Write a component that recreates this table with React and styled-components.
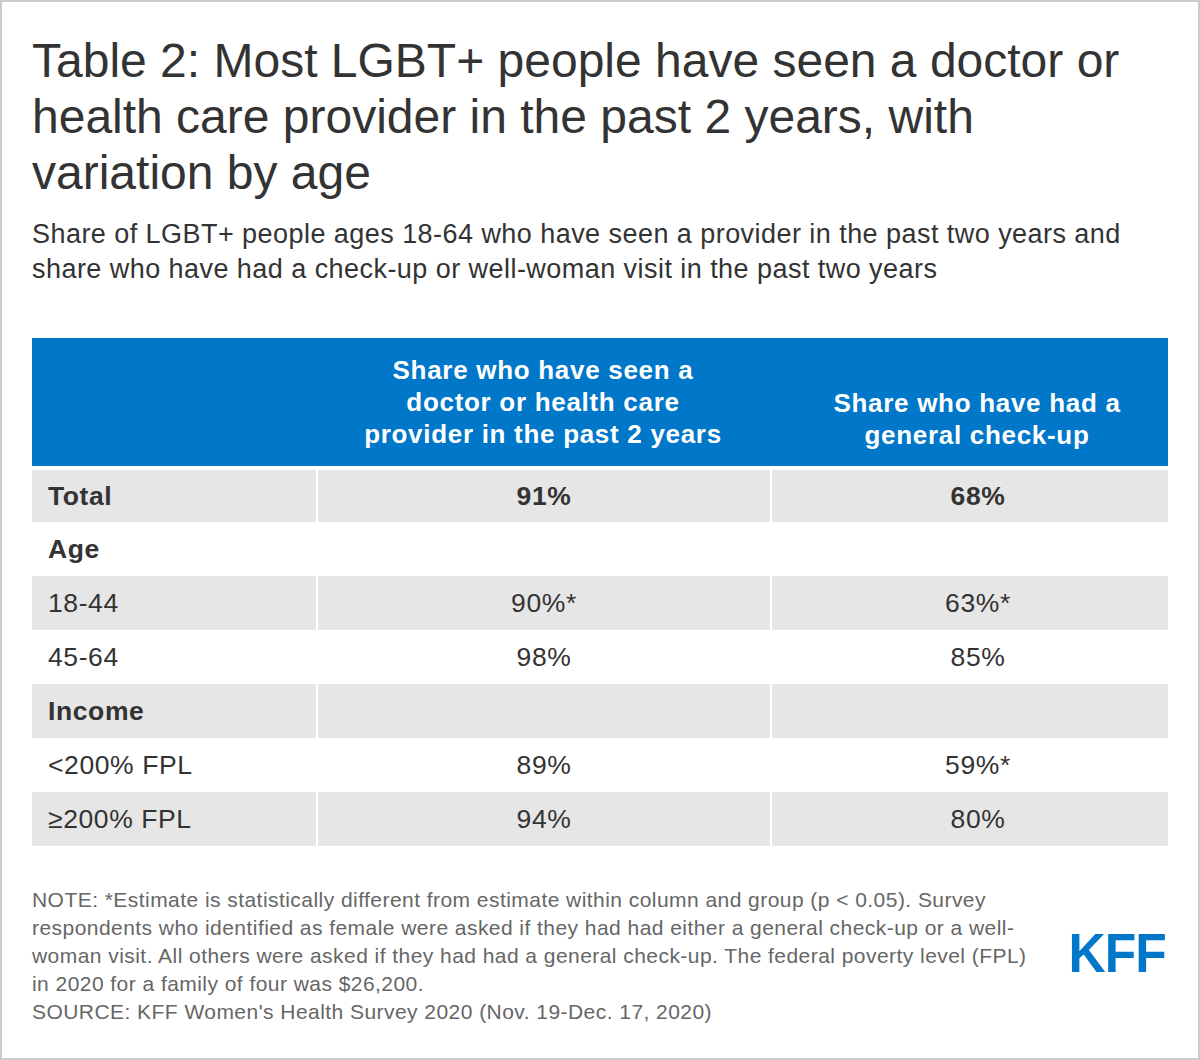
import React from 'react';
import styled, { createGlobalStyle } from 'styled-components';

const TEXT_COLOR = '#333333';
const BLUE = '#0077c8';
const ROW_GRAY = '#e6e6e6';

const GlobalStyle = createGlobalStyle`
  html, body {
    margin: 0;
    padding: 0;
    background: #ffffff;
  }
  body {
    font-family: 'Liberation Sans', Arial, sans-serif;
    color: ${TEXT_COLOR};
  }
`;

const Frame = styled.div`
  width: 1200px;
  height: 1060px;
  box-sizing: border-box;
  border: 2px solid #cccccc;
  padding: 31px 30px 0 30px;
  display: flex;
  flex-direction: column;
  background: #ffffff;
`;

const Title = styled.h1`
  margin: 0;
  font-size: 48px;
  font-weight: 400;
  line-height: 56px;
  color: ${TEXT_COLOR};
`;

const Subtitle = styled.p`
  margin: 16px 0 0 0;
  font-size: 27px;
  line-height: 35px;
  letter-spacing: 0.45px;
  color: ${TEXT_COLOR};
`;

const Table = styled.div`
  margin-top: 51px;
  display: flex;
  flex-direction: column;
`;

const HeaderRow = styled.div`
  display: grid;
  grid-template-columns: 284px 454px 398px;
  height: 128px;
  background: ${BLUE};
  margin-bottom: 4px;
`;

const HeaderCell = styled.div`
  display: flex;
  align-items: ${(props) => (props.bottom ? 'flex-end' : 'center')};
  justify-content: center;
  text-align: center;
  color: #ffffff;
  font-size: 26px;
  font-weight: 700;
  line-height: 32px;
  letter-spacing: 0.7px;
  padding: ${(props) => props.pad || '0'};
`;

const TableBody = styled.div`
  display: flex;
  flex-direction: column;
`;

const Row = styled.div`
  display: grid;
  grid-template-columns: 284px 452px 396px;
  column-gap: 2px;
  height: 54px;

  &:first-child {
    height: 52px;
  }
`;

const Cell = styled.div`
  display: flex;
  align-items: center;
  justify-content: ${(props) => (props.label ? 'flex-start' : 'center')};
  padding-left: ${(props) => props.indent || 0}px;
  background: ${(props) => (props.shaded ? ROW_GRAY : '#ffffff')};
  font-size: 26.5px;
  letter-spacing: 0.6px;
  font-weight: ${(props) => (props.bold ? 700 : 400)};
  color: ${TEXT_COLOR};
`;

const Footer = styled.div`
  margin-top: 40px;
  display: flex;
  justify-content: space-between;
  align-items: flex-start;
`;

const Notes = styled.div`
  width: 1008px;
  font-size: 21px;
  line-height: 28px;
  letter-spacing: 0.45px;
  color: #666666;
`;

const Logo = styled.div`
  margin-top: 47px;
  margin-right: 2px;
  font-family: 'Liberation Sans', Arial, sans-serif;
  font-weight: 700;
  font-size: 56px;
  line-height: 40px;
  color: ${BLUE};
  letter-spacing: -1px;
  transform: scaleX(0.92);
  transform-origin: right top;
`;

const rows = [
  { label: 'Total', a: '91%', b: '68%', shaded: true, bold: true },
  { label: 'Age', a: '', b: '', shaded: false, bold: true },
  { label: '18-44', a: '90%*', b: '63%*', shaded: true },
  { label: '45-64', a: '98%', b: '85%', shaded: false },
  { label: 'Income', a: '', b: '', shaded: true, bold: true },
  { label: '<200% FPL', a: '89%', b: '59%*', shaded: false },
  { label: '≥200% FPL', a: '94%', b: '80%', shaded: true },
];

export default function App() {
  return (
    <>
      <GlobalStyle />
      <Frame>
        <Title>
          Table 2: Most LGBT+ people have seen a doctor or health care provider in the past 2 years, with
          variation by age
        </Title>
        <Subtitle>
          Share of LGBT+ people ages 18-64 who have seen a provider in the past two years and share who have
          had a check-up or well-woman visit in the past two years
        </Subtitle>
        <Table>
          <HeaderRow>
            <HeaderCell />
            <HeaderCell pad="0 40px">Share who have seen a doctor or health care provider in the past 2 years</HeaderCell>
            <HeaderCell bottom pad="0 30px 15px 46px">Share who have had a general check-up</HeaderCell>
          </HeaderRow>
          <TableBody>
            {rows.map((row) => (
              <Row key={row.label}>
                <Cell label indent={16} shaded={row.shaded} bold={row.bold}>
                  {row.label}
                </Cell>
                <Cell shaded={row.shaded} bold={row.bold}>
                  {row.a}
                </Cell>
                <Cell indent={16} shaded={row.shaded} bold={row.bold}>
                  {row.b}
                </Cell>
              </Row>
            ))}
          </TableBody>
        </Table>
        <Footer>
          <Notes>
            NOTE: *Estimate is statistically different from estimate within column and group (p &lt; 0.05). Survey
            respondents who identified as female were asked if they had had either a general check-up or a
            well-woman visit. All others were asked if they had had a general check-up. The federal poverty level
            (FPL) in 2020 for a family of four was $26,200.
            <br />
            SOURCE: KFF Women's Health Survey 2020 (Nov. 19-Dec. 17, 2020)
          </Notes>
          <Logo>KFF</Logo>
        </Footer>
      </Frame>
    </>
  );
}
